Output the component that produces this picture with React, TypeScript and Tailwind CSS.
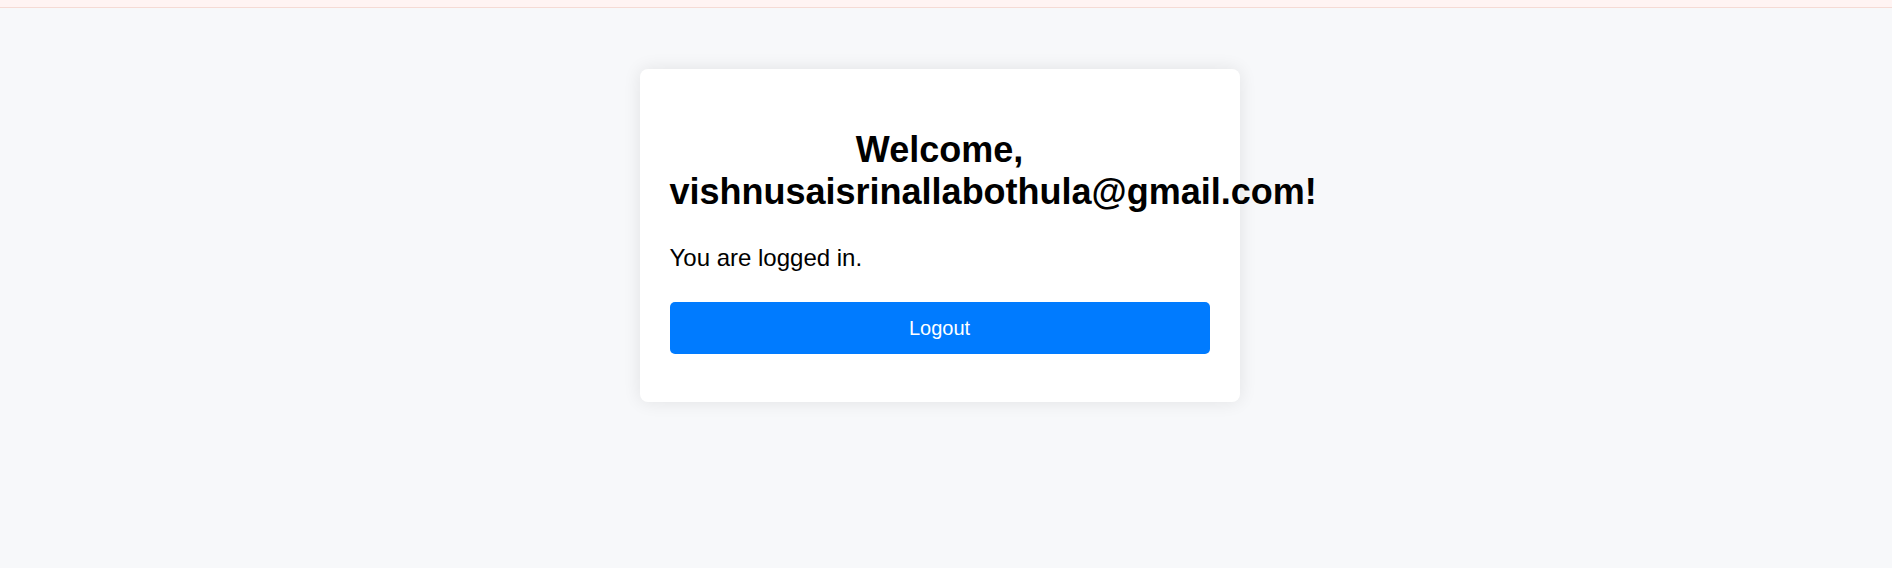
export default function App() {
  const email = "vishnusaisrinallabothula@gmail.com";

  return (
    <div className="min-h-[568px] bg-[#f7f8fa] font-['Liberation_Sans',Arial,sans-serif] text-black">
      <div className="h-[8px] bg-[#fff4f3] border-b border-[#f5dbd5]" />
      <div className="flex justify-center pt-[61px] pr-[13px]">
        <div className="w-[600px] rounded-[8px] bg-white px-[30px] pt-[30px] pb-[48px] shadow-[0_0_18px_rgba(0,0,0,0.09)]">
          <h2 className="mt-[30px] text-center text-[36px] font-bold leading-[42px]">
            Welcome, {email}!
          </h2>
          <p className="mt-[31px] text-[24px] leading-[28px]">You are logged in.</p>
          <button className="mt-[30px] h-[52px] w-full rounded-[5px] bg-[#007bff] text-[20px] text-white">
            Logout
          </button>
        </div>
      </div>
    </div>
  );
}
